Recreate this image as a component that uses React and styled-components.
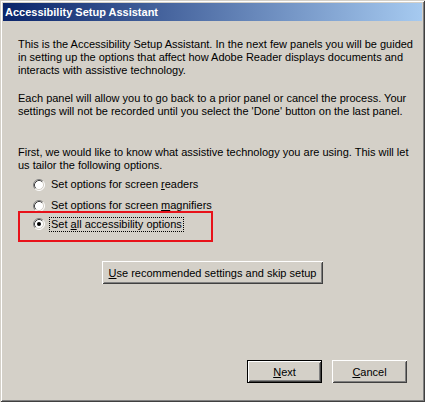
import React from "react";
import styled, { createGlobalStyle } from "styled-components";

const GlobalStyle = createGlobalStyle`
    html, body {
        margin: 0;
        padding: 0;
        background: #d4d0c8;
    }
`;

const Window = styled.div`
    width: 425px;
    height: 402px;
    box-sizing: border-box;
    padding: 3px;
    display: flex;
    flex-direction: column;
    background: #d4d0c8;
    box-shadow: inset 1px 1px #d4d0c8, inset -1px -1px #404040,
        inset 2px 2px #ffffff, inset -2px -2px #808080;
    font-family: Tahoma, "Liberation Sans", Arial, sans-serif;
    font-size: 11px;
    color: #000;
`;

const TitleBar = styled.div`
    height: 18px;
    display: flex;
    align-items: center;
    padding-left: 2px;
    background: linear-gradient(to right, #0a246a, #a6caf0);
    color: #fff;
    font-weight: bold;
    font-size: 11px;
`;

const Body = styled.div`
    flex: 1;
    display: flex;
    flex-direction: column;
    padding: 17px 15px 0 15px;
`;

const Para = styled.p`
    margin: ${({ $top }) => $top || 0}px 0 0 0;
    line-height: 13px;
    white-space: nowrap;
`;

const OptionList = styled.div`
    display: flex;
    flex-direction: column;
    gap: 2px;
    margin-top: 3px;
`;

const Option = styled.label`
    display: flex;
    align-items: center;
    gap: 4px;
    height: 19px;
    padding-left: 15px;
    box-sizing: border-box;
    white-space: nowrap;
`;

const Highlight = styled(Option)`
    width: 195px;
    height: 31px;
    margin-top: -6px;
    padding-left: 13px;
    padding-top: 5px;
    border: 2px solid #e8121a;
    align-items: flex-start;
`;

const OptionText = styled.span`
    line-height: 13px;
    padding: 0 1px;
    border: 1px ${({ $focus }) => ($focus ? "dotted #000" : "solid transparent")};
    margin-top: ${({ $focus }) => ($focus ? "-1px" : "0")};
`;

const Key = styled.u`
    text-decoration: underline;
`;

const CenterRow = styled.div`
    display: flex;
    justify-content: center;
    margin-top: 19px;
`;

const Button = styled.button`
    width: ${({ $w }) => $w}px;
    height: 23px;
    padding: 0;
    margin: 0;
    border: ${({ $default }) => ($default ? "1px solid #000" : "none")};
    background: #d4d0c8;
    box-sizing: border-box;
    font-family: inherit;
    font-size: 11px;
    color: #000;
    box-shadow: inset 1px 1px #ffffff, inset -1px -1px #404040,
        inset 2px 2px #d4d0c8, inset -2px -2px #808080;
`;

const Footer = styled.div`
    margin-top: auto;
    display: flex;
    justify-content: flex-end;
    gap: 10px;
    padding: 0 15px 16px 0;
`;

const Radio = ({ checked }) => (
    <svg width="12" height="12" viewBox="0 0 12 12" style={{ flex: "none" }}>
        <circle cx="6" cy="6" r="5" fill="#fff" />
        <path d="M2.11 9.89 A5.5 5.5 0 0 1 9.89 2.11" fill="none" stroke="#808080" />
        <path d="M9.89 2.11 A5.5 5.5 0 0 1 2.11 9.89" fill="none" stroke="#ffffff" />
        <path d="M2.82 9.18 A4.5 4.5 0 0 1 9.18 2.82" fill="none" stroke="#404040" />
        <path d="M9.18 2.82 A4.5 4.5 0 0 1 2.82 9.18" fill="none" stroke="#d4d0c8" />
        {checked && <circle cx="6" cy="6" r="2" fill="#000" />}
    </svg>
);

const App = () => {
    return (
        <>
            <GlobalStyle />
            <Window>
                <TitleBar>Accessibility Setup Assistant</TitleBar>
                <Body>
                    <Para>
                        This is the Accessibility Setup Assistant. In the next few panels you will be guided<br />
                        in setting up the options that affect how Adobe Reader displays documents and<br />
                        interacts with assistive technology.
                    </Para>
                    <Para $top={15}>
                        Each panel will allow you to go back to a prior panel or cancel the process. Your<br />
                        settings will not be recorded until you select the 'Done' button on the last panel.
                    </Para>
                    <Para $top={28}>
                        First, we would like to know what assistive technology you are using. This will let<br />
                        us tailor the following options.
                    </Para>
                    <OptionList>
                        <Option>
                            <Radio />
                            <OptionText>Set options for screen <Key>r</Key>eaders</OptionText>
                        </Option>
                        <Option>
                            <Radio />
                            <OptionText>Set options for screen <Key>m</Key>agnifiers</OptionText>
                        </Option>
                        <Highlight>
                            <Radio checked />
                            <OptionText $focus>Set <Key>a</Key>ll accessibility options</OptionText>
                        </Highlight>
                    </OptionList>
                    <CenterRow>
                        <Button $w={221}><Key>U</Key>se recommended settings and skip setup</Button>
                    </CenterRow>
                </Body>
                <Footer>
                    <Button $w={75} $default><Key>N</Key>ext</Button>
                    <Button $w={75}><Key>C</Key>ancel</Button>
                </Footer>
            </Window>
        </>
    );
};

export default App;
